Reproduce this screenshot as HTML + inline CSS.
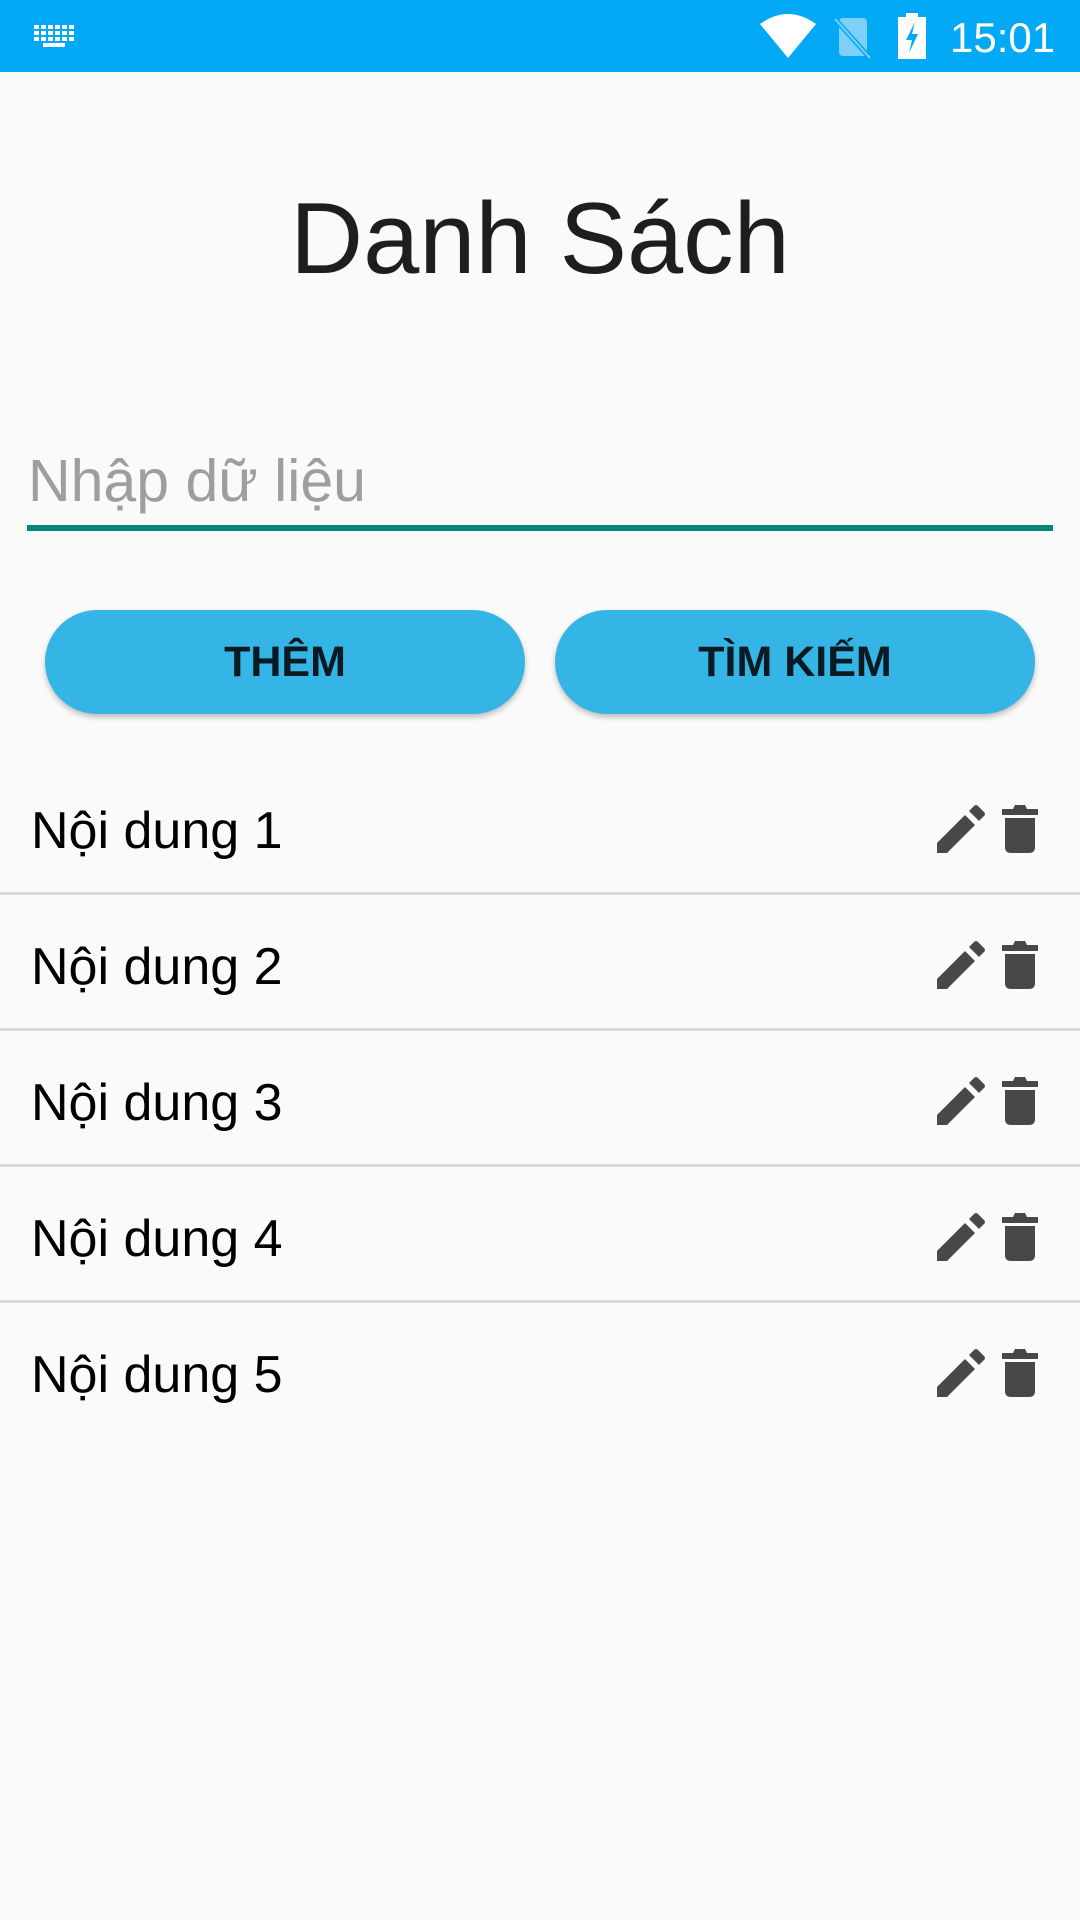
<!DOCTYPE html>
<html><head><meta charset="utf-8"><style>
*{margin:0;padding:0;box-sizing:border-box}
body{width:1080px;height:1920px;background:#fafafa;font-family:"Liberation Sans","Noto Sans CJK SC",sans-serif;position:relative;overflow:hidden}
.sb{position:absolute;left:0;top:0;width:1080px;height:72px;background:#03a9f4}
.abs{position:absolute;white-space:nowrap}
.btn{position:absolute;top:610px;height:104px;width:480px;border-radius:52px;background:#35b5e5;box-shadow:0 3px 6px rgba(0,0,0,.25);color:#0b1a22;font-weight:bold;font-size:43px;text-align:center;line-height:104px}
.row{position:absolute;left:0;width:1080px;height:136px}
.row .t{position:absolute;left:31px;top:42px;font-size:52px;color:#000;line-height:60px}
.row .d{position:absolute;left:0;bottom:0;width:1080px;height:3px;background:#dadada}
.row svg{position:absolute;top:46px}
</style></head><body>
<div class="sb">
<svg class="abs" style="left:34px;top:25px" width="42" height="22" viewBox="0 0 42 22" fill="#fff"><g><rect x="0" y="0" width="5" height="4"/><rect x="7" y="0" width="5" height="4"/><rect x="14" y="0" width="5" height="4"/><rect x="21" y="0" width="5" height="4"/><rect x="28" y="0" width="5" height="4"/><rect x="35" y="0" width="5" height="4"/><rect x="0" y="6" width="5" height="4"/><rect x="7" y="6" width="5" height="4"/><rect x="14" y="6" width="5" height="4"/><rect x="21" y="6" width="5" height="4"/><rect x="28" y="6" width="5" height="4"/><rect x="35" y="6" width="5" height="4"/><rect x="0" y="12" width="5" height="4"/><rect x="7" y="12" width="5" height="4"/><rect x="14" y="12" width="5" height="4"/><rect x="21" y="12" width="5" height="4"/><rect x="28" y="12" width="5" height="4"/><rect x="35" y="12" width="5" height="4"/><rect x="9" y="18" width="22" height="4"/></g></svg>
<svg class="abs" style="left:760px;top:14px" width="56" height="44" viewBox="0 0 56 44"><path d="M0 10 Q28 -10 56 10 L28 44 Z" fill="#fff"/></svg>
<svg class="abs" style="left:833px;top:15px" width="40" height="44" viewBox="0 0 40 44"><rect x="6" y="3" width="28" height="38" rx="4" fill="#7fd0f7"/><line x1="2" y1="4" x2="38" y2="44" stroke="#03a9f4" stroke-width="5"/><line x1="2" y1="4" x2="37" y2="43" stroke="#7fd0f7" stroke-width="2"/></svg>
<svg class="abs" style="left:898px;top:13px" width="28" height="46" viewBox="0 0 28 46"><rect x="8" y="0" width="12" height="5" fill="#fff"/><rect x="0" y="4" width="28" height="42" fill="#fff"/><path d="M17 9 L8 27 H14 L11 40 L20 21 H14 Z" fill="#03a9f4"/></svg>
<div class="abs" style="left:950px;top:13px;font-size:42px;color:#fff;line-height:50px">15:01</div>
</div>
<div class="abs" style="left:0;width:1080px;text-align:center;top:174px;font-size:101px;color:#1e1e1e;line-height:130px">Danh Sách</div>
<div class="abs" style="left:28px;top:446px;font-size:59px;color:#9e9e9e;line-height:70px">Nhập dữ liệu</div>
<div class="abs" style="left:27px;top:525px;width:1026px;height:6px;background:#00877a"></div>
<div class="btn" style="left:45px">THÊM</div>
<div class="btn" style="left:555px">TÌM KIẾM</div>

<div class="row" style="top:759px"><div class="t">Nội dung 1</div><svg style="left:937px" width="48" height="48" viewBox="0 0 48 48" fill="#48484a"><path d="M0 38 L28 10 L38 20 L10 48 L0 48 Z"/><path d="M32 6 L37 1 Q39 -1 41 1 L47 7 Q49 9 47 11 L42 16 Z"/></svg><svg style="left:1002px" width="36" height="48" viewBox="0 0 36 48" fill="#48484a"><path d="M0 4 H11 L13 0 H23 L25 4 H36 V10 H0 Z"/><path d="M3 13 H33 V42 Q33 48 27 48 H9 Q3 48 3 42 Z"/></svg><div class="d"></div></div>
<div class="row" style="top:895px"><div class="t">Nội dung 2</div><svg style="left:937px" width="48" height="48" viewBox="0 0 48 48" fill="#48484a"><path d="M0 38 L28 10 L38 20 L10 48 L0 48 Z"/><path d="M32 6 L37 1 Q39 -1 41 1 L47 7 Q49 9 47 11 L42 16 Z"/></svg><svg style="left:1002px" width="36" height="48" viewBox="0 0 36 48" fill="#48484a"><path d="M0 4 H11 L13 0 H23 L25 4 H36 V10 H0 Z"/><path d="M3 13 H33 V42 Q33 48 27 48 H9 Q3 48 3 42 Z"/></svg><div class="d"></div></div>
<div class="row" style="top:1031px"><div class="t">Nội dung 3</div><svg style="left:937px" width="48" height="48" viewBox="0 0 48 48" fill="#48484a"><path d="M0 38 L28 10 L38 20 L10 48 L0 48 Z"/><path d="M32 6 L37 1 Q39 -1 41 1 L47 7 Q49 9 47 11 L42 16 Z"/></svg><svg style="left:1002px" width="36" height="48" viewBox="0 0 36 48" fill="#48484a"><path d="M0 4 H11 L13 0 H23 L25 4 H36 V10 H0 Z"/><path d="M3 13 H33 V42 Q33 48 27 48 H9 Q3 48 3 42 Z"/></svg><div class="d"></div></div>
<div class="row" style="top:1167px"><div class="t">Nội dung 4</div><svg style="left:937px" width="48" height="48" viewBox="0 0 48 48" fill="#48484a"><path d="M0 38 L28 10 L38 20 L10 48 L0 48 Z"/><path d="M32 6 L37 1 Q39 -1 41 1 L47 7 Q49 9 47 11 L42 16 Z"/></svg><svg style="left:1002px" width="36" height="48" viewBox="0 0 36 48" fill="#48484a"><path d="M0 4 H11 L13 0 H23 L25 4 H36 V10 H0 Z"/><path d="M3 13 H33 V42 Q33 48 27 48 H9 Q3 48 3 42 Z"/></svg><div class="d"></div></div>
<div class="row" style="top:1303px"><div class="t">Nội dung 5</div><svg style="left:937px" width="48" height="48" viewBox="0 0 48 48" fill="#48484a"><path d="M0 38 L28 10 L38 20 L10 48 L0 48 Z"/><path d="M32 6 L37 1 Q39 -1 41 1 L47 7 Q49 9 47 11 L42 16 Z"/></svg><svg style="left:1002px" width="36" height="48" viewBox="0 0 36 48" fill="#48484a"><path d="M0 4 H11 L13 0 H23 L25 4 H36 V10 H0 Z"/><path d="M3 13 H33 V42 Q33 48 27 48 H9 Q3 48 3 42 Z"/></svg></div>
</body></html>
